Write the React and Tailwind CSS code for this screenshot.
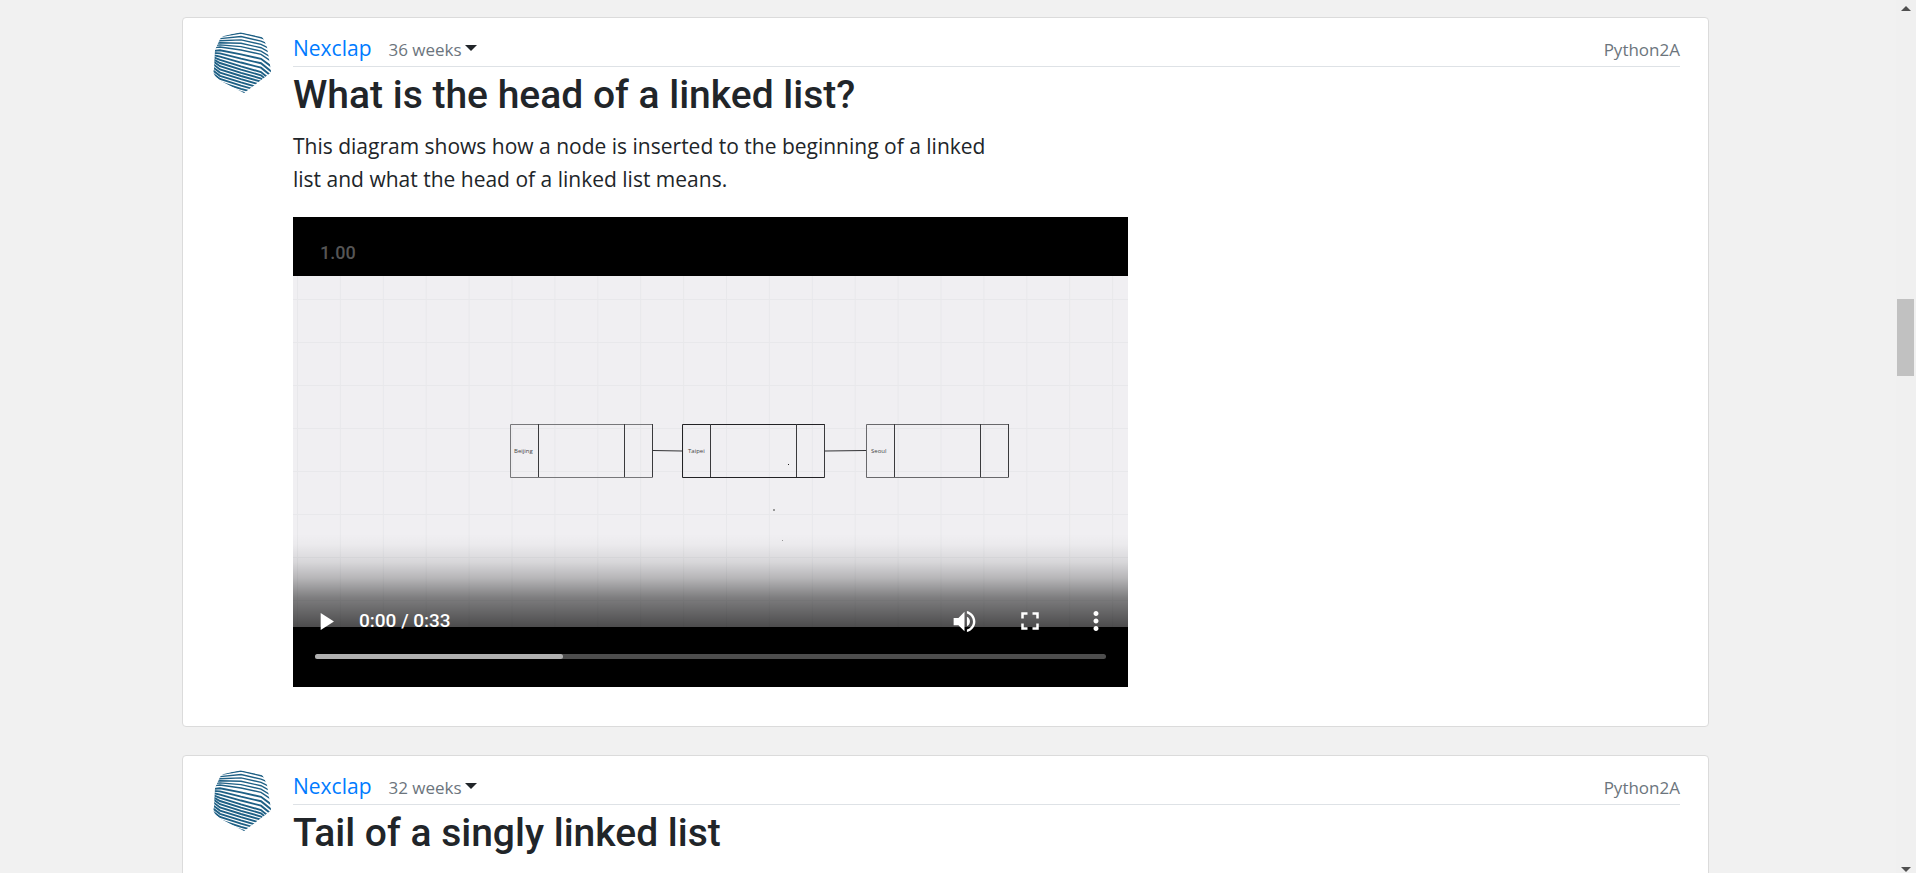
import React from 'react';
import { MdPlayArrow, MdVolumeUp, MdFullscreen, MdMoreVert } from 'react-icons/md';

const STRIPES = Array.from({ length: 21 }, (_, i) => {
  const ridge = i < 6 ? 4.5 + i * 2.1 : 15 + (i - 5) * 3.2;
  const slope = Math.min(0.3, 0.03 + i * 0.03);
  const peak = ridge + 22 * slope - Math.max(0, 4 - i * 0.6);
  const right = ridge + 41 * slope;
  const left = ridge < 20 ? ridge + 1 : ridge - Math.min(6, (ridge - 20) * 0.4);
  return `M-1 ${left} L7 ${ridge} L28 ${peak} L48 ${right} L59 ${right + 4 + Math.min(i * 0.7, 5)}`;
});

function Avatar({ id }) {
  return (
    <svg viewBox="0 0 58 61" className="h-[61px] w-[58px]" role="img" aria-label="Nexclap">
      <clipPath id={id}>
        <path d="M7 7 Q8 5 11 4 L27 0 L47 4 Q50 5 51 8 L54 15 L58 39 Q58 41 56 42 L31 61 L8 49 Q2 45 1 42 Q0 40 1 37 L2 18 Z" />
      </clipPath>
      <g clipPath={`url(#${id})`} fill="none" stroke="#1f6085">
        {STRIPES.map((d, i) => (
          <path key={i} d={d} strokeWidth={i < 6 ? 1.4 : 1.9} />
        ))}
      </g>
    </svg>
  );
}

const NODES = [
  { x: 217, name: 'Beijing', tx: 4, color: '#77777a' },
  { x: 389, name: 'Taipei', tx: 6, color: '#222225' },
  { x: 573, name: 'Seoul', tx: 5, color: '#68686b' },
];

function Diagram() {
  return (
    <svg viewBox="0 0 835 351" className="block w-full bg-[#f0eff2]" aria-label="Linked list diagram">
      <g stroke="#e8e8eb">
        {Array.from({ length: 20 }, (_, i) => (
          <path key={i} d={`M${4.5 + i * 42.9} 0V351`} />
        ))}
        {Array.from({ length: 8 }, (_, i) => (
          <path key={i} d={`M0 ${23.5 + i * 43}H835`} />
        ))}
      </g>
      {NODES.map((n) => (
        <g key={n.name} transform={`translate(${n.x} 148)`}>
          <path d="M.5 .5H142.5V53.5H.5Z" fill="none" stroke={n.color} />
          <path d="M28.5 0V53M114.5 0V53M142.5 0V53" stroke="#3a3a3d" />
          <text x={n.tx} y="29" fontSize="6" fontFamily="Open Sans, sans-serif" fill="#444">
            {n.name}
          </text>
        </g>
      ))}
      <path d="M360 174.5L389 175M532 175L573 174.5" stroke="#333336" strokeWidth="1.2" />
      <path d="M495 188h1v1h-1z" fill="#222" />
      <path d="M480 233h2v2h-2zM489 264h1v1h-1z" fill="#999" />
    </svg>
  );
}

function ControlButton({ label, children }) {
  return (
    <button type="button" aria-label={label} className="flex size-[30px] items-center justify-center">
      {children}
    </button>
  );
}

function Video() {
  return (
    <div className="relative mt-[21px] w-full max-w-[835px] bg-black pt-[59px] pb-[60px]">
      <span className="absolute top-[24px] left-[27px] font-[Roboto,sans-serif] text-[18px] leading-6 font-medium text-[#555]">
        1.00
      </span>
      <Diagram />
      <div className="absolute inset-x-0 bottom-0 flex flex-col bg-[linear-gradient(to_bottom,transparent_0px,rgba(0,0,0,0.02)_10px,rgba(0,0,0,0.1)_28px,rgba(0,0,0,0.24)_44px,rgba(0,0,0,0.48)_64px,rgba(0,0,0,0.69)_94px,rgba(0,0,0,0.72)_100px)] px-[22px] pt-[72px] pb-[28px] text-white">
        <div className="flex items-center pr-[2px]">
          <div className="-ml-[5px]">
            <ControlButton label="Play">
              <MdPlayArrow size={29} />
            </ControlButton>
          </div>
          <span className="ml-[19px] grow font-[Roboto,sans-serif] text-[19px] leading-6 font-medium">0:00 / 0:33</span>
          <div className="-mr-[7px] flex gap-9">
            <ControlButton label="Mute">
              <MdVolumeUp size={29} />
            </ControlButton>
            <ControlButton label="Full screen">
              <MdFullscreen size={30} />
            </ControlButton>
            <ControlButton label="More options">
              <MdMoreVert size={30} />
            </ControlButton>
          </div>
        </div>
        <div className="relative mt-[18px] h-[5px] rounded-full bg-[#4d4d4d]">
          <div className="h-full w-[248px] rounded-full bg-[#b0b0b0]" />
          <input type="range" min="0" max="33" defaultValue="0" aria-label="Seek" className="absolute inset-0 h-full w-full opacity-0" />
        </div>
      </div>
    </div>
  );
}

function Post({ id, age, title, children }) {
  return (
    <article className="flex gap-[22px] rounded border border-[#dbdbdb] bg-white pt-[14px] pr-[28px] pb-[39px] pl-[30px]">
      <div className="shrink-0">
        <Avatar id={id} />
      </div>
      <div className="min-w-0 grow">
        <header className="flex h-[35px] items-baseline border-b border-[#dee2e6] font-['Open_Sans',sans-serif]">
          <a href="#nexclap" className="text-[21px] leading-[33px] text-[#007bff]">Nexclap</a>
          <button type="button" className="ml-[17px] flex items-center gap-[3px] text-[17px] text-[#6c757d]">
            {age}
            <svg viewBox="0 0 12 6" className="mb-[3px] h-[6px] w-[12px]" fill="#212529" aria-hidden="true">
              <path d="M0 0H12L6 6Z" />
            </svg>
          </button>
          <span className="ml-auto text-[17px] text-[#6c757d]">Python2A</span>
        </header>
        <h2 className="mt-[5px] font-[Roboto,sans-serif] text-[39px] leading-[47px] font-medium">{title}</h2>
        {children}
      </div>
    </article>
  );
}

function ScrollBar() {
  return (
    <div className="flex w-5 shrink-0 flex-col items-center bg-[#f0f0f0] pt-[6px] pr-[1px] pb-[1px]" aria-hidden="true">
      <svg viewBox="0 0 10 5" className="h-[5px] w-[10px]" fill="#505050"><path d="M0 5L5 0L10 5Z" /></svg>
      <div className="mt-[288px] h-[77px] w-[17px] bg-[#c1c1c1]" />
      <svg viewBox="0 0 10 5" className="mt-auto h-[5px] w-[10px]" fill="#505050"><path d="M0 0H10L5 5Z" /></svg>
    </div>
  );
}

export default function App() {
  return (
    <div className="flex h-screen overflow-hidden bg-[#f1f1f1] text-[#212529]">
      <main className="flex min-w-0 grow flex-col gap-7 overflow-hidden pt-[17px] pr-[187px] pl-[182px] *:shrink-0">
        <Post id="avatar-head" age="36 weeks" title="What is the head of a linked list?">
          <p className="mt-[11px] max-w-[720px] font-['Open_Sans',sans-serif] text-[21px] leading-[33px]">
            This diagram shows how a node is inserted to the beginning of a linked list and what the head of a linked list means.
          </p>
          <Video />
        </Post>
        <Post id="avatar-tail" age="32 weeks" title="Tail of a singly linked list">
          <div className="h-40" />
        </Post>
      </main>
      <ScrollBar />
    </div>
  );
}
